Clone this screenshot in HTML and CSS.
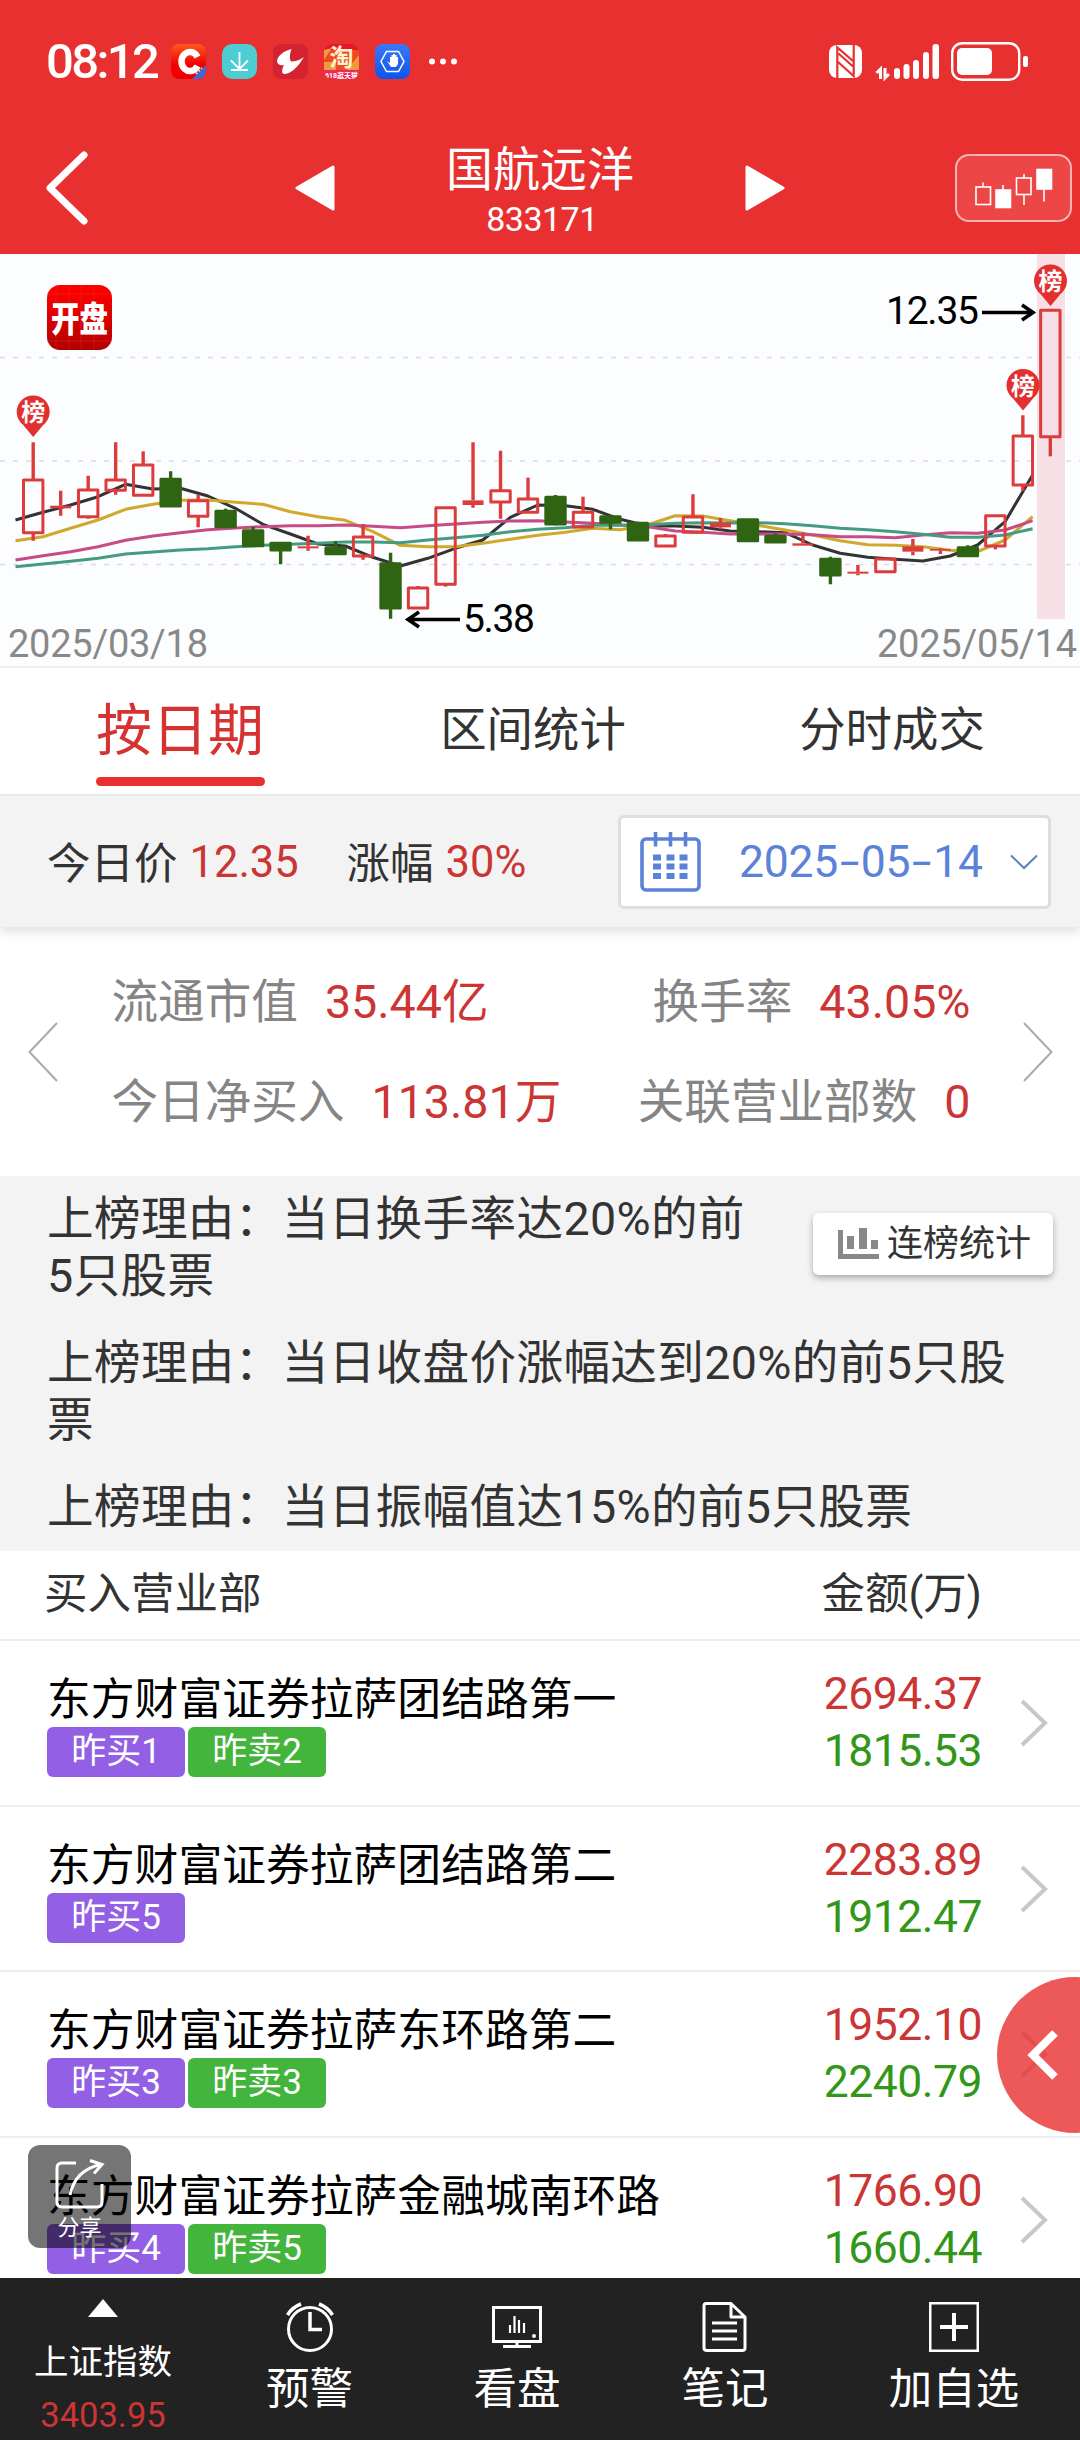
FILE: index.html
```
<!DOCTYPE html>
<html lang="zh-CN">
<head>
    <meta charset="UTF-8">
    <meta name="viewport" content="width=device-width, initial-scale=1.0">
    <title>国航远洋 833171</title>
    <link rel="stylesheet" href="styles.css">
</head>
<body>
    <div class="app">
        <!-- status bar -->
        <div class="status-bar">
            <span class="clock">08:12</span>
            <svg class="app-icons" width="290" height="36" viewBox="171 44 290 36">
                <defs>
                    <linearGradient id="orange" x1="0" y1="0" x2="0" y2="1"><stop offset="0" stop-color="#ff5a1c"/><stop offset=".6" stop-color="#f00000"/></linearGradient>
                    <linearGradient id="blue" x1="0" y1="0" x2="0" y2="1"><stop offset="0" stop-color="#3b78f8"/><stop offset="1" stop-color="#0c55ec"/></linearGradient>
                    <clipPath id="cIcon"><rect x="171" y="44" width="35" height="35" rx="8"/></clipPath>
                    <clipPath id="tIcon"><rect x="324" y="44" width="35" height="35" rx="8"/></clipPath>
                </defs>
                <g clip-path="url(#cIcon)">
                    <rect x="171" y="44" width="35" height="35" fill="url(#orange)"/>
                    <path d="M206 65v14h-14z" fill="#3d6bd5"/>
                    <path d="M196 74l6-6" stroke="#b9cdf6" stroke-width="2" stroke-dasharray="2 1.500"/>
                    <path d="M197.500 57a8.500 9.500 0 1 0 0 9" fill="none" stroke="#fff" stroke-width="6.500"/>
                </g>
                <rect x="222" y="44" width="35" height="35" rx="10" fill="#4ccdd3"/>
                <path d="M239.500 52v17M231 60.500l8.500 8.500 8.500-8.500M231 70h17" fill="none" stroke="#fff" stroke-width="1.800"/>
                <rect x="273" y="44" width="35" height="35" rx="8" fill="#d32230"/>
                <path d="M291.500 49c-8 2-14 7-14.500 12 0 3 3 5 7 4-2 4-3 8 0 9 7 0 14-7 20-17-4 3-9 4.500-13 4.500-2-4-1-8 .5-12.500z" fill="#fff"/>
                <g clip-path="url(#tIcon)">
                    <rect x="324" y="44" width="35" height="35" fill="#ef4a1f"/>
                    <path d="M324 44h35v6h-35z" fill="#e8162c"/>
                    <path d="M324 50l8-2-8 12zM359 55v15l-12 0zM324 62h12v8h-12z" fill="#f09a3c"/>
                    <rect x="324" y="70" width="35" height="9" fill="#ee2858"/>
                    <text x="341.500" y="66" text-anchor="middle" font-size="24" font-weight="700" fill="#fff3d0">淘</text>
                    <text x="341.500" y="77.500" text-anchor="middle" font-size="7" font-weight="700" fill="#fff">618逛天猫</text>
                </g>
                <rect x="375" y="44" width="35" height="35" rx="8" fill="url(#blue)"/>
                <path d="M386.500 51.500h12l5.500 10-5.500 10h-12l-5.500-10z" fill="none" stroke="#fff" stroke-width="1.500"/>
                <path d="M387 61l3 2v-6h1.500v-2h1.500v-1h2v1h1.500v2h1.500v7l-2 3h-5z" fill="#fff"/>
                <g fill="#fff"><circle cx="432" cy="61.500" r="3"/><circle cx="443" cy="61.500" r="3"/><circle cx="454" cy="61.500" r="3"/></g>
            </svg>
            <svg class="signal" width="200" height="40" viewBox="829 41 200 40">
                <rect x="829" y="44" width="33" height="33" rx="8" fill="#fff"/>
                <path d="M837.300 78V46.500L853 60M853.700 43V75L838 61M838.500 52.500L853 65.500" fill="none" stroke="#e83030" stroke-width="2.200"/>
                <path d="M880.500 78V68l-4 4M885 67v10l4-4" fill="none" stroke="#fff" stroke-width="3"/>
                <g fill="#fff">
                    <rect x="894" y="67" width="6" height="11" rx="3"/>
                    <rect x="903.500" y="63" width="6" height="15" rx="3"/>
                    <rect x="913" y="59" width="6" height="19" rx="3"/>
                    <rect x="923" y="51" width="6" height="27" rx="3"/>
                    <rect x="932.500" y="43" width="6.500" height="35" rx="3"/>
                    <rect x="957" y="47" width="35" height="27" rx="5"/>
                    <rect x="1023" y="55" width="5" height="11" rx="2"/>
                </g>
                <rect x="952.200" y="42.200" width="67" height="36.500" rx="10" fill="none" stroke="#fff" stroke-width="2.400"/>
            </svg>
        </div>

        <!-- title bar -->
        <div class="title-bar">
            <svg class="back" width="42" height="74" viewBox="0 0 42 74"><path d="M38 4L4 37l34 33" fill="none" stroke="#fff" stroke-width="7" stroke-linecap="round" stroke-linejoin="round"/></svg>
            <svg class="prev" width="40" height="46" viewBox="0 0 40 46"><path d="M38 2v42L2 23z" fill="#fff" stroke="#fff" stroke-width="3" stroke-linejoin="round"/></svg>
            <div class="stock">
                <div class="stock-name">国航远洋</div>
                <div class="stock-code">833171</div>
            </div>
            <svg class="next" width="40" height="46" viewBox="0 0 40 46"><path d="M2 2v42l36-21z" fill="#fff" stroke="#fff" stroke-width="3" stroke-linejoin="round"/></svg>
            <div class="kline-btn">
                <svg width="78" height="42" viewBox="975 166 78 42" stroke="#fff" stroke-width="1.600" fill="none">
                    <path d="M983 181.500v4.500M1003 184v5M1024 173v4M1024 194v10M1044 188v12.500"/>
                    <rect x="976" y="186" width="14.500" height="17.500"/>
                    <rect x="996" y="189" width="14.500" height="17.500" fill="#fff"/>
                    <rect x="1016.500" y="177" width="14.500" height="16.500"/>
                    <rect x="1037" y="168.500" width="14.500" height="19.500" fill="#fff"/>
                </svg>
            </div>
        </div>

        <!-- k-line chart -->
        <div class="chart">
            <svg width="1080" height="414" viewBox="0 0 1080 414">
                <defs>
                    <linearGradient id="logo" x1="0" y1="0" x2="0" y2="1"><stop offset=".1" stop-color="#fb0000"/><stop offset="1" stop-color="#b30000"/></linearGradient>
                </defs>
                <g class="grid-line"><path d="M0 103.500H1080M0 207H1080M0 310.500H1080"/></g>
                <rect x="1037" y="0" width="28" height="365" fill="#f6dfe5"/>
                <g id="lines" fill="none" stroke-width="3" stroke-linejoin="round"></g>
                <g id="candles" stroke-linejoin="round"></g>
                <g id="pins"></g>
                <rect x="47" y="31" width="65" height="65" rx="13" fill="url(#logo)"/>
                <path d="M56 31v65M69 31v65M81 31v65M94 31v65M47 40h65M47 87h65" stroke="#e33" stroke-width=".7" opacity=".5"/>
                <text transform="translate(79.500 77.500) scale(1 1.250)" class="logo-text">开盘</text>
                <path d="M982 58.500h49M1022 51l11 7.500-11 7.500" fill="none" stroke="#000" stroke-width="3.600"/>
                <text x="886" y="70" font-size="39" textLength="93">12.35</text>
                <path d="M460 365.500h-49M419 358l-11 7.500 11 7.500" fill="none" stroke="#000" stroke-width="3.600"/>
                <text x="463" y="377.500" font-size="39" textLength="72">5.38</text>
                <text x="8" y="402.500" class="axis-text" textLength="200">2025/03/18</text>
                <text x="877" y="402.500" class="axis-text" textLength="200">2025/05/14</text>
            </svg>
        </div>

        <div class="tabs">
            <div class="tab active">按日期</div>
            <div class="tab">区间统计</div>
            <div class="tab">分时成交</div>
        </div>

        <div class="price-bar">
            <span class="label">今日价</span><span class="value price">12.35</span>
            <span class="label">涨幅</span><span class="value">30%</span>
            <div class="date-box">
                <svg width="61" height="60" viewBox="0 0 61 60" fill="none" stroke="#5b82d8" stroke-width="3.600">
                    <rect x="2" y="7" width="57" height="51" rx="4"/>
                    <path d="M15.500 0v14.500M30.500 0v14.500M45.500 0v14.500"/>
                    <path d="M13 25.500h8m5.500 0h8m5 0h8M13 34.500h8m5.500 0h8m5 0h8M13 44h8m5.500 0h8m5 0h8" stroke-width="6"/>
                </svg>
                <span class="date">2025<i>-</i>05<i>-</i>14</span>
                <svg width="28" height="16" viewBox="0 0 28 16"><path d="M1 1.500l13 12.500L27 1.500" fill="none" stroke="#5b82b8" stroke-width="2"/></svg>
            </div>
        </div>

        <div class="stats">
            <svg width="30" height="60" viewBox="0 0 30 60"><path d="M29 1L1.500 30 29 59" fill="none" stroke="#aaa" stroke-width="2"/></svg>
            <div class="stats-grid">
                <div>流通市值<b>35.44亿</b></div>
                <div class="right">换手率<b>43.05%</b></div>
                <div>今日净买入<b>113.81万</b></div>
                <div class="right">关联营业部数<b>0</b></div>
            </div>
            <svg width="30" height="60" viewBox="0 0 30 60"><path d="M1 1l27.500 29L1 59" fill="none" stroke="#aaa" stroke-width="2"/></svg>
        </div>

        <div class="reasons">
            <p>上榜理由：当日换手率达20%的前<br>5只股票</p>
            <p>上榜理由：当日收盘价涨幅达到20%的前5只股<br>票</p>
            <p>上榜理由：当日振幅值达15%的前5只股票</p>
            <div class="rank-btn">
                <svg width="42" height="32" viewBox="0 0 42 32" fill="#888"><path d="M0 2h5v24h36v5H0zM9 8h7v13H9zM21 0h8v21h-8zM33 12h7v9h-7z"/></svg>
                连榜统计
            </div>
        </div>

        <div class="table-head"><span>买入营业部</span><span>金额(万)</span></div>
        <div class="list">
            <div class="row">
                <div class="info">
                    <div class="name">东方财富证券拉萨团结路第一</div>
                    <div class="tags"><span class="tag buy">昨买1</span><span class="tag sell">昨卖2</span></div>
                </div>
                <div class="amount"><div class="up">2694.37</div><div class="down">1815.53</div></div>
                <svg class="arrow" width="28" height="48" viewBox="0 0 28 48"><path d="M2 2l23 22L2 46"/></svg>
            </div>
            <div class="row">
                <div class="info">
                    <div class="name">东方财富证券拉萨团结路第二</div>
                    <div class="tags"><span class="tag buy">昨买5</span></div>
                </div>
                <div class="amount"><div class="up">2283.89</div><div class="down">1912.47</div></div>
                <svg class="arrow" width="28" height="48" viewBox="0 0 28 48"><path d="M2 2l23 22L2 46"/></svg>
            </div>
            <div class="row">
                <div class="info">
                    <div class="name">东方财富证券拉萨东环路第二</div>
                    <div class="tags"><span class="tag buy">昨买3</span><span class="tag sell">昨卖3</span></div>
                </div>
                <div class="amount"><div class="up">1952.10</div><div class="down">2240.79</div></div>
                <svg class="arrow" width="28" height="48" viewBox="0 0 28 48"><path d="M2 2l23 22L2 46"/></svg>
            </div>
            <div class="row">
                <div class="info">
                    <div class="name">东方财富证券拉萨金融城南环路</div>
                    <div class="tags"><span class="tag buy">昨买4</span><span class="tag sell">昨卖5</span></div>
                </div>
                <div class="amount"><div class="up">1766.90</div><div class="down">1660.44</div></div>
                <svg class="arrow" width="28" height="48" viewBox="0 0 28 48"><path d="M2 2l23 22L2 46"/></svg>
            </div>
        </div>

        <!-- bottom menu -->
        <div class="bottom-bar">
            <div class="index">
                <svg width="30" height="18" viewBox="0 0 30 18"><path d="M15 0l15 18H0z" fill="#fff"/></svg>
                <div class="index-name">上证指数</div>
                <div class="index-value">3403.95</div>
            </div>
            <div class="menu-item">
                <svg width="50" height="50" viewBox="0 0 50 50" fill="none" stroke="#fff" stroke-width="3">
                    <circle cx="25" cy="27" r="21.500"/><path d="M25 10v17.500h12" stroke-width="3.500"/><path d="M2.500 13Q7 5.500 16 2M34 2Q43 5.500 47.500 13" stroke-width="3.500"/>
                </svg>
                预警
            </div>
            <div class="menu-item">
                <svg width="50" height="50" viewBox="0 0 50 50" fill="none" stroke="#fff" stroke-width="3">
                    <rect x="1.500" y="5.500" width="47" height="34"/><path d="M25 40v4M11 44.500h28"/><path d="M18 31v-8M22.500 31V14M27 31V18M32 31v-10" stroke-width="2.200"/><circle cx="42" cy="34" r="2" fill="#fff" stroke="none"/>
                </svg>
                看盘
            </div>
            <div class="menu-item">
                <svg width="50" height="50" viewBox="0 0 50 50" fill="none" stroke="#fff" stroke-width="3" stroke-linejoin="round">
                    <path d="M6 1.500h25L45 15v31q0 2.500-3 2.500H7q-3 0-3-2.500V4q0-2.500 2-2.500zM31 2v13h13"/><path d="M12 21h25M12 29h25M12 37h25"/>
                </svg>
                笔记
            </div>
            <div class="menu-item last">
                <svg width="50" height="50" viewBox="0 0 50 50" fill="none" stroke="#fff"><rect x="1.250" y="1.250" width="47.500" height="47.500" stroke-width="2.500"/><path d="M25 11v28M11 25h28" stroke-width="4"/></svg>
                加自选
            </div>
        </div>

        <!-- floating buttons -->
        <div class="float-btn"><svg width="32" height="50" viewBox="0 0 32 50"><path d="M28 3L6 25l22 22" fill="none" stroke="#fff" stroke-width="8"/></svg></div>
        <div class="share-btn">
            <svg width="52" height="50" viewBox="0 0 52 50" fill="none" stroke="#fff" stroke-width="3"><path d="M22 4H8Q3 4 3 9v34q0 5 5 5h35q5 0 5-5V25"/><path d="M16 36Q21 11 47 5.500M36 1.500l12 4-8 9"/></svg>
            分享
        </div>
    </div>
    <script src="script.js"></script>
</body>
</html>
```

FILE: styles.css
```
* { margin: 0; padding: 0; box-sizing: border-box; }
body { font-family: Roboto, "Noto Sans CJK SC", sans-serif; background: #fff; color: #333; }
svg { display: block; flex: none; }
.app { position: relative; width: 1080px; height: 2440px; display: flex; flex-direction: column; overflow: hidden; }
.app > div { flex: none; }

.status-bar { height: 120px; background: #e83030; display: flex; align-items: center; padding: 3px 51px 0 46px; }
.clock { width: 125px; font-size: 49px; font-weight: 500; letter-spacing: -2.600px; color: #fff; line-height: 60px; white-space: nowrap; }
.signal { margin-left: auto; }

.title-bar { height: 134px; background: #e83030; display: flex; align-items: center; color: #fff; padding: 1px 8px 0 46px; }
.prev { margin-left: 207px; }
.stock { width: 410px; padding-top: 6px; text-align: center; }
.stock-name { font-size: 47px; line-height: 56px; }
.stock-code { font-size: 34px; line-height: 42px; letter-spacing: -0.500px; padding-left: 4px; }
.kline-btn { margin-left: auto; width: 117px; height: 68px; border: 2px solid #f8b4b4; border-radius: 14px; background: #ec4646; display: flex; align-items: center; justify-content: center; }

.chart { height: 414px; background: #fcfdff; border-bottom: 2px solid #eee; }
.grid-line { stroke: #dcdcde; stroke-width: 1.500; stroke-dasharray: 5 8; }
.logo-text { font-size: 28.500px; font-weight: 900; fill: #fff; text-anchor: middle; }
.axis-text { font-size: 38px; fill: #888; }
.pin-text { font-size: 24px; font-weight: 700; fill: #fff; text-anchor: middle; }

.tabs { height: 128px; display: grid; grid-template-columns: 360px 346px 372px; border-bottom: 2px solid #ebebeb; }
.tab { font-size: 46.400px; line-height: 125px; text-align: center; }
.tab.active { position: relative; font-size: 56px; line-height: 127px; color: #d63232; }
.tab.active::after { content: ""; position: absolute; left: 96px; bottom: 9px; width: 169px; height: 9px; border-radius: 5px; background: #e83030; }

.price-bar { position: relative; height: 131px; background: #f3f3f3; display: flex; align-items: center; padding: 1px 29px 0 47px; font-size: 43.500px; box-shadow: 0 5px 10px rgba(0,0,0,0.12); }
.label { position: relative; top: -2px; }
.value { color: #cb3534; margin-left: 12px; }
.value.price { width: 157px; }
.date-box { margin-left: auto; width: 433px; height: 94px; border: 3px solid #dadfe3; border-radius: 6px; background: #fff; display: flex; align-items: center; padding: 0 10px 0 19px; }
.date { margin-left: 38px; width: 273px; font-size: 44.500px; letter-spacing: -0.300px; color: #5b82d8; white-space: nowrap; }
.date i { display: inline-block; width: 23px; text-align: center; font-style: normal; transform: scaleX(1.600); }

.stats { height: 249px; display: flex; align-items: center; justify-content: space-between; padding: 0 27px 0 28px; }
.stats-grid { width: 858px; display: grid; grid-template-columns: 430px 429px; row-gap: 40px; font-size: 46.600px; line-height: 60px; color: #858585; white-space: nowrap; }
.stats-grid b { margin-left: 27px; font-weight: 400; color: #cb3534; }
.right { text-align: right; }

.reasons { position: relative; height: 375px; padding: 15px 47px 0; background: #f3f3f3; font-size: 46.600px; line-height: 57px; letter-spacing: 0.350px; }
.reasons p { margin-bottom: 30px; white-space: nowrap; }
.rank-btn { position: absolute; top: 37px; right: 27px; width: 240px; height: 62px; border-radius: 6px; background: #fff; box-shadow: 0 3px 6px rgba(0,0,0,0.3); display: flex; align-items: center; gap: 7px; padding-left: 25px; font-size: 36px; letter-spacing: 0; }

.table-head { height: 90px; display: flex; justify-content: space-between; padding: 0 98px 0 44px; font-size: 43.500px; line-height: 88px; border-bottom: 2px solid #eee; }
.app > .list { flex: 1; min-height: 0; overflow: hidden; }
.row { height: 165.500px; display: flex; border-bottom: 2px solid #eee; padding: 0 32px 0 47px; }
.info { flex: 1; padding-top: 32px; }
.name { font-size: 43.800px; line-height: 54px; color: #000; white-space: nowrap; }
.tags { display: flex; gap: 3px; }
.tag { width: 138px; height: 50px; border-radius: 6px; font-size: 35px; line-height: 50px; text-align: center; color: #fff; }
.buy { background: #935fe5; }
.sell { background: #43b53c; }
.amount { padding-top: 25px; font-size: 44.500px; line-height: 57px; letter-spacing: -0.500px; text-align: right; }
.up { color: #cb3534; }
.down { color: #329618; }
.arrow { margin: 58px 0 0 38px; fill: none; stroke: #c8c8c8; stroke-width: 4; }

.bottom-bar { height: 162px; background: #222; display: grid; grid-template-columns: 206px 207px 208px 208px 250px; color: #fff; }
.index { display: flex; flex-direction: column; align-items: center; padding-top: 21px; white-space: nowrap; }
.index-name { margin-top: 22px; font-size: 34.500px; line-height: 46px; }
.index-value { margin-top: 8px; font-size: 34.500px; line-height: 44px; color: #cb3534; }
.menu-item { display: flex; flex-direction: column; align-items: center; padding-top: 24px; font-size: 43.500px; line-height: 76px; }

.float-btn { position: absolute; left: 997px; top: 1977px; width: 156px; height: 156px; border-radius: 50%; background: rgba(232,48,48,0.8); padding: 53px 0 0 30px; }
.share-btn { position: absolute; left: 28px; top: 2145px; width: 103px; height: 103px; border-radius: 12px; background: rgba(0,0,0,0.54); color: #fff; font-size: 22px; line-height: 38px; display: flex; flex-direction: column; align-items: center; padding-top: 14px; }
```

FILE: script.js
```
const NS = 'http://www.w3.org/2000/svg';
const STEP = 27.49;
const RED = '#dc3c3c';
const GREEN = '#2f6413';

// high, body top, body bottom, low, type (r = rise, g = fall, f = flat)
const candles = [
    [577, 690, 848, 872, 'r'], [722, 767, 775, 797, 'f'], [677, 720, 800, 806, 'r'], [577, 690, 721, 734, 'r'],
    [604, 645, 736, 736, 'r'], [664, 688, 768, 770, 'g'], [734, 752, 799, 832, 'r'], [776, 784, 830, 830, 'g'],
    [830, 842, 887, 887, 'g'], [879, 880, 900, 943, 'g'], [857, 889, 895, 902, 'f'], [873, 893, 911, 911, 'g'],
    [822, 861, 918, 929, 'r'], [908, 941, 1074, 1106, 'g'], [1008, 1014, 1074, 1074, 'r'], [773, 773, 1003, 1010, 'r'],
    [577, 751, 765, 773, 'f'], [602, 722, 756, 806, 'r'], [683, 747, 787, 787, 'r'], [735, 742, 822, 826, 'g'],
    [740, 787, 831, 831, 'r'], [800, 800, 817, 838, 'g'], [815, 820, 870, 872, 'g'], [852, 858, 888, 888, 'r'],
    [733, 801, 847, 851, 'r'], [804, 818, 832, 838, 'f'], [808, 809, 872, 875, 'g'], [850, 859, 876, 876, 'g'],
    [847, 880, 887, 887, 'f'], [920, 928, 975, 1003, 'g'], [945, 965, 971, 976, 'f'], [927, 927, 965, 965, 'r'],
    [867, 889, 905, 916, 'f'], [895, 897, 902, 912, 'f'], [886, 893, 917, 920, 'g'], [797, 797, 888, 898, 'r'],
    [496, 558, 705, 722, 'r'], [181, 181, 560, 619, 'r']
];

// moving averages
const averages = {
    '#333333': [810, 787, 765, 740, 703, 717, 715, 738, 775, 823, 852, 882, 888, 922, 948, 925, 895, 870, 802, 765, 767, 778, 808, 828, 828, 832, 843, 845, 848, 885, 910, 922, 928, 933, 918, 885, 815, 675],
    '#d0a82c': [872, 860, 835, 810, 778, 763, 751, 750, 757, 763, 785, 800, 811, 845, 886, 890, 890, 880, 868, 856, 847, 835, 839, 824, 797, 798, 812, 826, 840, 855, 872, 884, 886, 890, 901, 905, 870, 800],
    '#c74b86': [930, 917, 905, 890, 871, 858, 848, 839, 834, 830, 827, 827, 825, 829, 833, 827, 822, 817, 813, 812, 816, 820, 825, 830, 843, 847, 852, 852, 852, 854, 860, 860, 863, 855, 848, 850, 840, 812],
    '#459b80': [950, 942, 934, 925, 912, 906, 900, 896, 890, 886, 883, 880, 876, 876, 878, 870, 863, 856, 845, 838, 833, 826, 826, 824, 820, 818, 819, 818, 821, 827, 835, 839, 845, 853, 862, 862, 855, 836]
};

function toY(v) {
    return v / 3 - 4;
}

function add(parent, tag, attrs, text) {
    const el = document.createElementNS(NS, tag);
    for (const key in attrs) el.setAttribute(key, attrs[key]);
    if (text) el.textContent = text;
    document.getElementById(parent).appendChild(el);
}

for (const color in averages) {
    const points = averages[color].map((v, i) => (15.5 + i * STEP).toFixed(1) + ',' + toY(v).toFixed(1));
    add('lines', 'polyline', { points: points.join(' '), stroke: color });
}

candles.forEach(([high, top, bottom, low, type], i) => {
    const x = 33.2 + i * STEP;
    const color = type === 'g' ? GREEN : RED;
    add('candles', 'path', {
        d: `M${x} ${toY(high)}V${toY(top)}M${x} ${toY(bottom)}V${toY(low)}`,
        stroke: color, 'stroke-width': 3.4
    });
    if (type === 'f') {
        add('candles', 'rect', { x: x - 10.5, y: toY(top), width: 21, height: (bottom - top) / 3, fill: color });
        return;
    }
    add('candles', 'rect', {
        x: x - 9.7, y: toY(top), width: 19.4, height: (bottom - top) / 3,
        fill: type === 'g' ? color : 'none', stroke: color, 'stroke-width': 3
    });
});

// 榜 markers
[[33.2, 158], [1023, 131.5], [1050.5, 27]].forEach(([x, y]) => {
    add('pins', 'path', { d: `M${x} ${y + 25}L${x - 10} ${y + 13}A16.5 16.5 0 1 1 ${x + 10} ${y + 13}Z`, fill: '#e23030' });
    add('pins', 'text', { x: x, y: y + 9, class: 'pin-text' }, '榜');
});
```
